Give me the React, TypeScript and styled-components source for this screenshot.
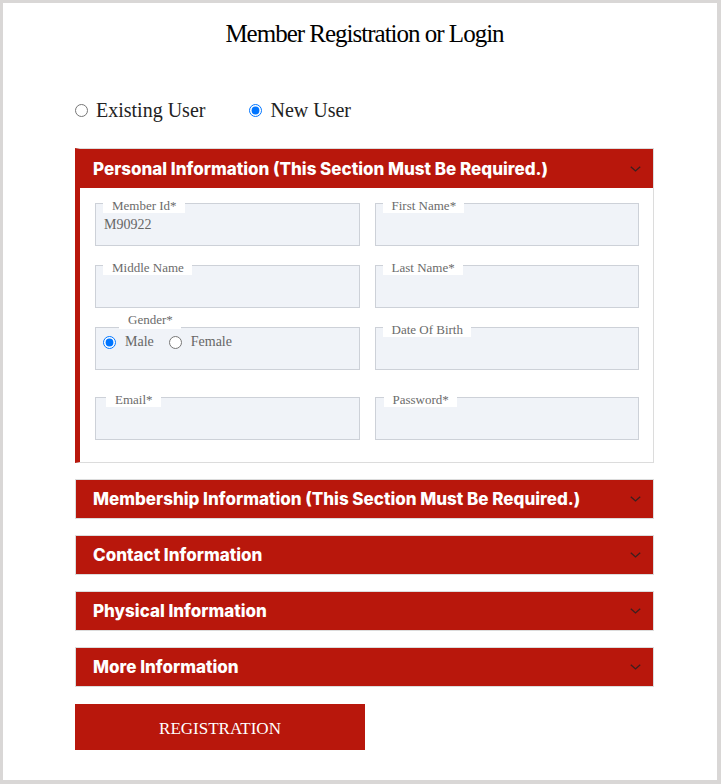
import React from "react";
import styled, { createGlobalStyle } from "styled-components";

const RED = "#b8170c";

const GlobalStyle = createGlobalStyle`
  html, body { margin: 0; padding: 0; }
  body {
    background: #d9d7d6;
    font-family: "Liberation Serif", "Times New Roman", serif;
  }
  * { box-sizing: border-box; }
`;

const Page = styled.div`
  margin: 3px 4px 4px 3px;
  height: 777px;
  background: #fff;
  padding: 16px 0 0 72px;
`;

const Content = styled.div`
  width: 579px;
  display: flex;
  flex-direction: column;
`;

const Title = styled.h1`
  margin: 0;
  font: 400 25px/30px "Liberation Serif", "Times New Roman", serif;
  letter-spacing: -1px;
  text-align: center;
  color: #000;
`;

const ModeRow = styled.div`
  display: flex;
  align-items: center;
  margin-top: 49px;
  height: 24px;
`;

const ModeOption = styled.label`
  display: flex;
  align-items: center;
  gap: 8px;
  font: 400 20px/24px "Liberation Serif", "Times New Roman", serif;
  color: #222;
  margin-right: 44px;
`;

const Radio = styled.input.attrs({ type: "radio" })`
  margin: 0;
  width: 13px;
  height: 13px;
  flex: none;
`;

const Accordion = styled.div`
  margin-top: 26px;
  display: flex;
  flex-direction: column;
  gap: 16px;
`;

const Item = styled.div<{ $open?: boolean }>`
  border: 1px solid #dcdcdc;
  border-left: ${(p) => (p.$open ? `5px solid ${RED}` : "1px solid #dcdcdc")};
  background: #fff;
`;

const Header = styled.div<{ $open?: boolean }>`
  height: ${(p) => (p.$open ? 39 : 38)}px;
  background: ${RED};
  display: flex;
  align-items: center;
  justify-content: space-between;
  padding: 0 12px 0 ${(p) => (p.$open ? 13 : 17)}px;
  color: #fff;
  font: 800 17px/20px Inter, Roboto, "Liberation Sans", sans-serif;
`;

const Chevron = styled.svg`
  width: 11px;
  height: 6px;
  flex: none;
`;

const Body = styled.div`
  padding: 15px 14px 22px 15px;
  display: grid;
  grid-template-columns: 1fr 1fr;
  column-gap: 15px;
  row-gap: 19px;
`;

const Field = styled.div<{ $push?: boolean }>`
  position: relative;
  height: 43px;
  border: 1px solid #cdd1d8;
  background: #f0f3f8;
  padding: 13px 8px 0;
  margin-top: ${(p) => (p.$push ? 8 : 0)}px;
  font: 400 14px/16px "Liberation Serif", "Times New Roman", serif;
  color: #666;
`;

const GenderField = styled(Field)`
  padding: 6px 8px 0 7px;
`;

const FieldLabel = styled.span<{ $left: number; $raised?: boolean }>`
  position: absolute;
  top: ${(p) => (p.$raised ? -13 : -3)}px;
  left: ${(p) => p.$left}px;
  background: #fff;
  padding: 0 8px ${(p) => (p.$raised ? 5 : 3)}px 9px;
  font: 400 13px/9px "Liberation Serif", "Times New Roman", serif;
  color: #6b6b6b;
  white-space: nowrap;
`;

const Options = styled.div`
  display: flex;
  align-items: center;
  height: 16px;
`;

const Option = styled.label<{ $gap?: number }>`
  display: flex;
  align-items: center;
  gap: 9px;
  margin-left: ${(p) => p.$gap ?? 0}px;
  font: 400 14px/16px "Liberation Serif", "Times New Roman", serif;
  color: #666;
`;

const Submit = styled.button`
  margin-top: 17px;
  width: 290px;
  height: 46px;
  background: ${RED};
  border: none;
  color: #fff;
  font: 400 17px/20px "Liberation Serif", "Times New Roman", serif;
  cursor: pointer;
  padding: 4px 0 0;
`;

const ChevronIcon = () => (
  <Chevron viewBox="0 0 11 6">
    <polyline points="0.8,0.8 5.5,5 10.2,0.8" fill="none" stroke="#3b2020" strokeWidth="1.3" />
  </Chevron>
);

const collapsed = [
  "Membership Information (This Section Must Be Required.)",
  "Contact Information",
  "Physical Information",
  "More Information",
];

export default function App() {
  return (
    <>
      <GlobalStyle />
      <Page>
        <Content>
          <Title>Member Registration or Login</Title>
          <ModeRow>
            <ModeOption>
              <Radio name="mode" />
              Existing User
            </ModeOption>
            <ModeOption>
              <Radio name="mode" defaultChecked />
              New User
            </ModeOption>
          </ModeRow>
          <Accordion>
            <Item $open>
              <Header $open>
                <span>Personal Information (This Section Must Be Required.)</span>
                <ChevronIcon />
              </Header>
              <Body>
                <Field>
                  <FieldLabel $left={7}>Member Id*</FieldLabel>
                  M90922
                </Field>
                <Field>
                  <FieldLabel $left={7}>First Name*</FieldLabel>
                </Field>
                <Field>
                  <FieldLabel $left={7}>Middle Name</FieldLabel>
                </Field>
                <Field>
                  <FieldLabel $left={7}>Last Name*</FieldLabel>
                </Field>
                <GenderField>
                  <FieldLabel $left={23} $raised>
                    Gender*
                  </FieldLabel>
                  <Options>
                    <Option>
                      <Radio name="gender" defaultChecked />
                      Male
                    </Option>
                    <Option $gap={15}>
                      <Radio name="gender" />
                      Female
                    </Option>
                  </Options>
                </GenderField>
                <Field>
                  <FieldLabel $left={7}>Date Of Birth</FieldLabel>
                </Field>
                <Field $push>
                  <FieldLabel $left={10}>Email*</FieldLabel>
                </Field>
                <Field $push>
                  <FieldLabel $left={8}>Password*</FieldLabel>
                </Field>
              </Body>
            </Item>
            {collapsed.map((t) => (
              <Item key={t}>
                <Header>
                  <span>{t}</span>
                  <ChevronIcon />
                </Header>
              </Item>
            ))}
          </Accordion>
          <Submit>REGISTRATION</Submit>
        </Content>
      </Page>
    </>
  );
}
